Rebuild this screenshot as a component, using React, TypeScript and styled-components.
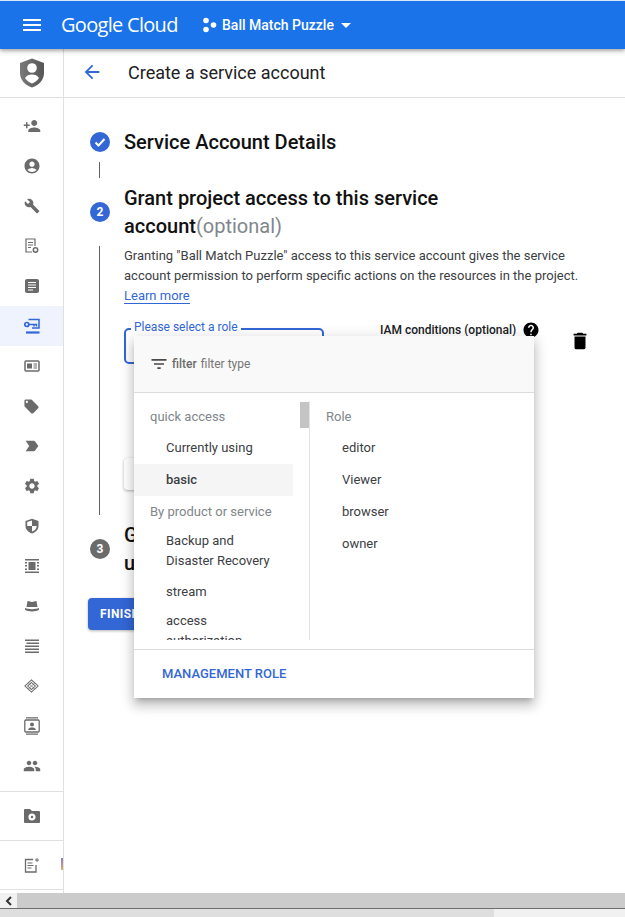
import styled, { createGlobalStyle } from "styled-components";
import {
  MdAccountCircle,
  MdArrowBack,
  MdBuild,
  MdDelete,
  MdFilterList,
  MdHelp,
  MdLabelImportant,
  MdLocalOffer,
  MdMenu,
  MdPeople,
  MdPersonAdd,
  MdSettings,
  MdArrowDropDown,
} from "react-icons/md";

const GlobalStyle = createGlobalStyle`
  html, body {
    margin: 0;
    padding: 0;
    background: #fff;
  }
  * {
    box-sizing: border-box;
  }
  body {
    font-family: Roboto, "Liberation Sans", sans-serif;
    color: #202124;
  }
`;

const Page = styled.div`
  width: 625px;
  height: 917px;
  display: flex;
  flex-direction: column;
  overflow: hidden;
  position: relative;
`;

const TopBar = styled.header`
  height: 49px;
  flex: none;
  background: #1a73e8;
  border-top: 1px solid #d7e6fb;
  display: flex;
  align-items: center;
  color: #fff;
  padding-left: 20px;
  position: relative;
  z-index: 3;
  box-shadow: 0 2px 4px rgba(0, 0, 0, 0.35);
`;

const Logo = styled.span`
  font-family: "Open Sans", sans-serif;
  font-size: 20px;
  letter-spacing: -0.7px;
  margin: 0 0 2px 17px;
  width: 116px;
  white-space: nowrap;
`;

const ProjectPicker = styled.div`
  display: flex;
  align-items: center;
  margin-left: 25px;
  font-size: 14px;
  font-weight: 500;
`;

const ProjectName = styled.span`
  margin-left: 4px;
`;

const Body = styled.div`
  flex: 1;
  display: flex;
  min-height: 0;
`;

const Sidebar = styled.nav`
  width: 64px;
  flex: none;
  border-right: 1px solid #e0e0e0;
  display: flex;
  flex-direction: column;
  color: #6b6b6b;
`;

const ShieldCell = styled.div`
  height: 49px;
  flex: none;
  display: flex;
  align-items: center;
  justify-content: center;
  border-bottom: 1px solid #e0e0e0;
`;

const NavList = styled.div`
  padding-top: 8px;
  padding-bottom: 5px;
  border-bottom: 1px solid #e0e0e0;
`;

const NavItem = styled.div<{ $active?: boolean }>`
  height: 40px;
  display: flex;
  align-items: center;
  justify-content: center;
  background: ${(p) => (p.$active ? "#eef3fd" : "transparent")};
  color: ${(p) => (p.$active ? "#3367d6" : "inherit")};
  svg {
    display: block;
  }
`;

const NavSingle = styled(NavItem)`
  height: 49px;
  border-bottom: 1px solid #e0e0e0;
  position: relative;
`;

const Sliver = styled.span`
  position: absolute;
  right: 0;
  top: 17px;
  width: 2px;
  height: 12px;
  background: linear-gradient(#8d7dc0, #d8b06a);
`;

const Content = styled.main`
  flex: 1;
  min-width: 0;
  display: flex;
  flex-direction: column;
  position: relative;
`;

const TitleBar = styled.div`
  height: 49px;
  flex: none;
  display: flex;
  align-items: center;
  border-bottom: 1px solid #e0e0e0;
  padding: 0 0 2px 17px;
  color: #3367d6;
`;

const PageTitle = styled.h1`
  font-size: 18px;
  font-weight: 400;
  margin: 0 0 0 25px;
  color: #202124;
`;

const Stepper = styled.div`
  padding: 30px 0 0 26px;
`;

const StepHead = styled.div`
  display: flex;
  align-items: center;
  gap: 14px;
`;

const StepCircle = styled.span<{ $muted?: boolean }>`
  width: 20px;
  height: 20px;
  flex: none;
  border-radius: 50%;
  background: ${(p) => (p.$muted ? "#6b6b6b" : "#3367d6")};
  color: #fff;
  font-size: 12px;
  font-weight: 700;
  display: flex;
  align-items: center;
  justify-content: center;
`;

const StepTitle = styled.h2`
  font-size: 20px;
  line-height: 28px;
  font-weight: 500;
  margin: 0;
  color: #111;
  width: 340px;
`;

const Optional = styled.span`
  font-weight: 400;
  color: #80868b;
`;

const Connector = styled.div<{ $height: number }>`
  height: ${(p) => p.$height}px;
  margin: 6px 0 6px 9px;
  border-left: 1px solid #5f6368;
  padding-left: 24px;
`;

const Description = styled.p`
  margin: 0;
  font-size: 13px;
  line-height: 20px;
  color: #3c4043;
  width: 470px;
`;

const LearnMore = styled.a`
  color: #3367d6;
  text-decoration: none;
  border-bottom: 1px solid #3367d6;
`;

const RoleRow = styled.div`
  display: flex;
  margin-top: 22px;
`;

const RoleField = styled.div`
  width: 200px;
  height: 36px;
  border: 2px solid #3367d6;
  border-radius: 5px;
  position: relative;
`;

const RoleLabel = styled.span`
  position: absolute;
  left: 5px;
  top: -10px;
  padding: 0 3px;
  background: #fff;
  color: #3367d6;
  font-size: 12px;
  line-height: 14px;
`;

const Conditions = styled.div`
  display: flex;
  align-items: center;
  gap: 6px;
  height: 16px;
  margin: -6px 0 0 56px;
  font-size: 12px;
  font-weight: 500;
  color: #202124;
  white-space: nowrap;
`;

const TrashButton = styled.div`
  margin: 2px 0 0 29px;
  color: #000;
  height: 22px;
`;

const AddRole = styled.div`
  width: 200px;
  height: 32px;
  margin-top: 94px;
  background: #fff;
  border-radius: 4px;
  box-shadow: 0 1px 3px rgba(60, 64, 67, 0.4);
`;

const FinishButton = styled.button`
  display: block;
  margin: 21px 0 0 -2px;
  width: 120px;
  height: 32px;
  border: 0;
  border-radius: 4px;
  padding: 0 12px;
  text-align: left;
  background: #3367d6;
  color: #fff;
  font-family: inherit;
  font-size: 12px;
  font-weight: 700;
  letter-spacing: 0.4px;
  box-shadow: 0 1px 3px rgba(60, 64, 67, 0.4);
`;

const Popup = styled.div`
  position: absolute;
  left: 70px;
  top: 287px;
  width: 400px;
  height: 362px;
  background: #fff;
  display: flex;
  flex-direction: column;
  box-shadow: 0 5px 5px -3px rgba(0, 0, 0, 0.2), 0 8px 10px 1px rgba(0, 0, 0, 0.14), 0 3px 14px 2px rgba(0, 0, 0, 0.12);
`;

const FilterBar = styled.div`
  height: 57px;
  flex: none;
  background: #f9f9f9;
  border-bottom: 1px solid #dcdcdc;
  display: flex;
  align-items: center;
  padding-left: 15px;
  padding-bottom: 1px;
  font-size: 12px;
  color: #4a4a4a;
`;

const FilterLabel = styled.span`
  font-weight: 500;
  margin: 0 4px 0 3px;
  color: #6b6b6b;
`;

const FilterHint = styled.span`
  color: #757575;
`;

const Columns = styled.div`
  flex: 1;
  min-height: 0;
  display: flex;
  padding-top: 8px;
  padding-bottom: 9px;
  border-bottom: 1px solid #dcdcdc;
`;

const LeftColumn = styled.div`
  width: 176px;
  flex: none;
  border-right: 1px solid #e4e4e4;
  position: relative;
  overflow: hidden;
  padding-right: 16px;
`;

const Thumb = styled.span`
  position: absolute;
  right: 0;
  top: 1px;
  width: 9px;
  height: 26px;
  background: #c4c4c4;
`;

const RightColumn = styled.div`
  flex: 1;
`;

const GroupLabel = styled.div<{ $inset: number }>`
  height: 31px;
  padding-left: ${(p) => p.$inset}px;
  display: flex;
  align-items: center;
  font-size: 13px;
  color: #80868b;
`;

const Option = styled.div<{ $selected?: boolean; $inset: number }>`
  min-height: 32px;
  padding-left: ${(p) => p.$inset}px;
  display: flex;
  align-items: center;
  font-size: 13px;
  line-height: 20px;
  color: #3c4043;
  font-weight: ${(p) => (p.$selected ? 500 : 400)};
  background: ${(p) => (p.$selected ? "#f5f5f5" : "transparent")};
`;

const TallOption = styled(Option)`
  min-height: 49px;
  padding-top: 4px;
  padding-bottom: 5px;
  align-items: flex-start;
`;

const CloseOption = styled(Option)`
  min-height: 31px;
`;

const PopupFooter = styled.div`
  height: 48px;
  flex: none;
  display: flex;
  align-items: center;
  padding: 0 0 2px 28px;
  color: #3367d6;
  font-size: 13px;
  font-weight: 500;
`;

const ScrollTrack = styled.div`
  height: 15px;
  flex: none;
  display: flex;
  background: #cbcbcb;
`;

const ScrollArrow = styled.div`
  width: 17px;
  flex: none;
  background: #f1f1f1;
  display: flex;
  align-items: center;
  justify-content: center;
`;

const WindowEdge = styled.div`
  height: 9px;
  flex: none;
  border-top: 1px solid #6e6e6e;
  background: linear-gradient(90deg, #dedede 0, #dedede 494px, #f1f1f1 494px);
`;

const ShieldIcon = () => (
  <svg width="24" height="30" viewBox="0 0 24 30">
    <defs>
      <linearGradient id="shieldFill" x1="0" x2="1" y1="0" y2="0">
        <stop offset="0" stopColor="#7a7a7a" />
        <stop offset="1" stopColor="#565656" />
      </linearGradient>
    </defs>
    <path d="M12 .5 24 5v10c0 7-5 12-12 14.500C5 27 0 22 0 15V5z" fill="url(#shieldFill)" />
    <circle cx="12" cy="10" r="4.800" fill="#fff" />
    <path d="M5 20c1.500-2.500 4-3.500 7-3.500s5.500 1 7 3.500c-1.500 2.500-4 4.500-7 5.500-3-1-5.500-3-7-5.500z" fill="#fff" />
  </svg>
);

const ProjectDots = () => (
  <svg width="16" height="16" viewBox="0 0 16 16" fill="#fff">
    <circle cx="4" cy="3.500" r="2.800" />
    <circle cx="4" cy="12.500" r="2.800" />
    <circle cx="11.500" cy="8" r="2.800" />
  </svg>
);

const CheckMark = () => (
  <svg width="14" height="14" viewBox="0 0 14 14">
    <path d="M2.500 7.500 5.500 10.500 11.500 4" fill="none" stroke="#fff" strokeWidth="2" />
  </svg>
);

const ReportGear = () => (
  <svg width="14" height="16" viewBox="0 0 14 16" fill="none" stroke="currentColor">
    <path d="M10 8V1H1v13h6" strokeWidth="1.200" />
    <path d="M3 4.500h5M3 7h5M3 9.500h3" strokeWidth="1" />
    <circle cx="10.500" cy="12" r="2.200" strokeWidth="1.500" />
  </svg>
);

const ArticleIcon = () => (
  <svg width="16" height="16" viewBox="0 0 16 16">
    <rect x="1" y="1" width="14" height="14" rx="2" fill="currentColor" />
    <path d="M4 4.500h8M4 7h8M4 9.500h8M4 12h5" stroke="#fff" strokeWidth="1" />
  </svg>
);

const ServiceKey = () => (
  <svg width="16" height="16" viewBox="0 0 16 16" fill="none" stroke="currentColor">
    <path d="M4.500 1.500h10.500v8.500H8" strokeWidth="1.500" />
    <path d="M2 14.500h13.500" strokeWidth="2.200" />
    <circle cx="2.800" cy="6.500" r="2" strokeWidth="1.700" />
    <path d="M5 6.500h7.500v2M10 6.500v2" strokeWidth="1.500" />
  </svg>
);

const CardIcon = () => (
  <svg width="16" height="14" viewBox="0 0 16 14">
    <rect x="1" y="2" width="14" height="10" rx="1" fill="none" stroke="currentColor" strokeWidth="1.500" />
    <rect x="3" y="4.500" width="5" height="5" fill="currentColor" />
    <path d="M9.500 5h3.500M9.500 7h3.500M9.500 9h3.500" stroke="currentColor" />
  </svg>
);

const HalfShield = () => (
  <svg width="14" height="16" viewBox="0 0 14 16">
    <path d="M7 .8 13.500 3v5c0 3.500-2.700 6.300-6.500 7.500C3.200 14.300.5 11.500.5 8V3z" fill="currentColor" />
    <path d="M7 2.500 2.200 4.100V8H7zM7 8v5.600c2.700-1 4.700-3 4.800-5.600z" fill="#fff" />
  </svg>
);

const FrameIcon = () => (
  <svg width="14" height="14" viewBox="0 0 14 14" fill="currentColor">
    <path d="M0 0h14v1.500H0zM0 12.500h14V14H0zM0 3h2v1.500H0zM12 3h2v1.500h-2zM0 6h2v1.500H0zM12 6h2v1.500h-2zM0 9.500h2V11H0zM12 9.500h2V11h-2zM3.500 3h7v8h-7z" />
  </svg>
);

const HatIcon = () => (
  <svg width="16" height="14" viewBox="0 0 16 14" fill="currentColor">
    <path d="M2.500 8 3.500 2.200c1.500-.4 2.500.8 4.500.8s3-1.200 4.500-.8L13.500 8z" />
    <path d="M1 9c3 1.500 11 1.500 14 0v1.800c-3 2.200-11 2.200-14 0z" />
  </svg>
);

const LinesIcon = () => (
  <svg width="14" height="14" viewBox="0 0 14 14" fill="currentColor">
    <path d="M0 .5h14V2H0zM1.500 3.500h12.500V5H1.500zM0 6.500h14V8H0zM0 9.500h14V11H0zM0 12.500h14V14H0z" />
  </svg>
);

const DiamondIcon = () => (
  <svg width="15" height="14" viewBox="0 0 16 16" preserveAspectRatio="none" fill="none" stroke="currentColor" strokeWidth="1.200">
    <path d="M8 1 15 8 8 15 1 8z" />
    <path d="M8 4 12 8 8 12 4 8z" />
    <path d="M4.500 4.500 11.500 11.500M11.500 4.500 4.500 11.500" strokeWidth=".8" />
  </svg>
);

const ContactIcon = () => (
  <svg width="16" height="18" viewBox="0 0 16 18" fill="none" stroke="currentColor">
    <path d="M2 .8h12M2 17.200h12" strokeWidth="1.300" />
    <rect x=".8" y="3" width="14.400" height="12" rx="1" strokeWidth="1.300" />
    <circle cx="8" cy="7.500" r="2" fill="currentColor" stroke="none" />
    <path d="M4 13c.5-2 2-2.500 4-2.500s3.500.5 4 2.500z" fill="currentColor" stroke="none" />
  </svg>
);

const FolderGear = () => (
  <svg width="16" height="14" viewBox="0 0 16 14">
    <path d="M0 1a1 1 0 0 1 1-1h5l2 2h7a1 1 0 0 1 1 1v10a1 1 0 0 1-1 1H1a1 1 0 0 1-1-1z" fill="currentColor" />
    <circle cx="8" cy="8" r="2.400" fill="none" stroke="#fff" strokeWidth="2.400" />
  </svg>
);

const SparkNote = () => (
  <svg width="16" height="16" viewBox="0 0 16 16" fill="none" stroke="currentColor">
    <path d="M9 2.500H1.500v12.500h10.500V8" strokeWidth="1.300" />
    <path d="M3.500 6h5M3.500 8.500h6M3.500 11h4" strokeWidth="1.100" />
    <path d="M13 1v4M11 3h4" strokeWidth="1" />
  </svg>
);

const navIcons = [
  <MdPersonAdd size={18} />,
  <MdAccountCircle size={18} />,
  <MdBuild size={16} />,
  <ReportGear />,
  <ArticleIcon />,
  <ServiceKey />,
  <CardIcon />,
  <MdLocalOffer size={17} />,
  <MdLabelImportant size={18} />,
  <MdSettings size={18} />,
  <HalfShield />,
  <FrameIcon />,
  <HatIcon />,
  <LinesIcon />,
  <DiamondIcon />,
  <ContactIcon />,
  <MdPeople size={18} />,
];

const ACTIVE_NAV = 5;

export default function App() {
  return (
    <Page>
      <GlobalStyle />
      <TopBar>
        <MdMenu size={24} />
        <Logo>Google Cloud</Logo>
        <ProjectPicker>
          <ProjectDots />
          <ProjectName>Ball Match Puzzle</ProjectName>
          <MdArrowDropDown size={24} />
        </ProjectPicker>
      </TopBar>
      <Body>
        <Sidebar>
          <ShieldCell>
            <ShieldIcon />
          </ShieldCell>
          <NavList>
            {navIcons.map((icon, i) => (
              <NavItem key={i} $active={i === ACTIVE_NAV}>
                {icon}
              </NavItem>
            ))}
          </NavList>
          <NavSingle>
            <FolderGear />
          </NavSingle>
          <NavSingle>
            <SparkNote />
            <Sliver />
          </NavSingle>
        </Sidebar>
        <Content>
          <TitleBar>
            <MdArrowBack size={22} />
            <PageTitle>Create a service account</PageTitle>
          </TitleBar>
          <Stepper>
            <StepHead>
              <StepCircle>
                <CheckMark />
              </StepCircle>
              <StepTitle>Service Account Details</StepTitle>
            </StepHead>
            <Connector $height={16} />
            <StepHead>
              <StepCircle>2</StepCircle>
              <StepTitle>
                Grant project access to this service account<Optional>(optional)</Optional>
              </StepTitle>
            </StepHead>
            <Connector $height={269}>
              <Description>
                Granting "Ball Match Puzzle" access to this service account gives the service account permission to perform specific actions on the resources in the project.
                <br />
                <LearnMore>Learn more</LearnMore>
              </Description>
              <RoleRow>
                <RoleField>
                  <RoleLabel>Please select a role</RoleLabel>
                </RoleField>
                <Conditions>
                  IAM conditions (optional)
                  <MdHelp size={18} color="#000" />
                </Conditions>
                <TrashButton>
                  <MdDelete size={22} />
                </TrashButton>
              </RoleRow>
              <AddRole />
            </Connector>
            <StepHead>
              <StepCircle $muted>3</StepCircle>
              <StepTitle>
                Grant users access to
                <br />
                use this service account
              </StepTitle>
            </StepHead>
            <FinishButton>FINISH</FinishButton>
          </Stepper>
          <Popup>
            <FilterBar>
              <MdFilterList size={20} />
              <FilterLabel>filter</FilterLabel>
              <FilterHint>filter type</FilterHint>
            </FilterBar>
            <Columns>
              <LeftColumn>
                <Thumb />
                <GroupLabel $inset={16}>quick access</GroupLabel>
                <Option $inset={32}>Currently using</Option>
                <Option $inset={32} $selected>
                  basic
                </Option>
                <GroupLabel $inset={16}>By product or service</GroupLabel>
                <TallOption $inset={32}>
                  <span>
                    Backup and
                    <br />
                    Disaster Recovery
                  </span>
                </TallOption>
                <CloseOption $inset={32}>stream</CloseOption>
                <TallOption $inset={32}>
                  <span>
                    access
                    <br />
                    authorization
                  </span>
                </TallOption>
              </LeftColumn>
              <RightColumn>
                <GroupLabel $inset={16}>Role</GroupLabel>
                <Option $inset={32}>editor</Option>
                <Option $inset={32}>Viewer</Option>
                <Option $inset={32}>browser</Option>
                <Option $inset={32}>owner</Option>
              </RightColumn>
            </Columns>
            <PopupFooter>MANAGEMENT ROLE</PopupFooter>
          </Popup>
        </Content>
      </Body>
      <ScrollTrack>
        <ScrollArrow>
          <svg width="8" height="10" viewBox="0 0 8 10">
            <path d="M6 1 2 5l4 4" fill="none" stroke="#333" strokeWidth="2" />
          </svg>
        </ScrollArrow>
      </ScrollTrack>
      <WindowEdge />
    </Page>
  );
}
